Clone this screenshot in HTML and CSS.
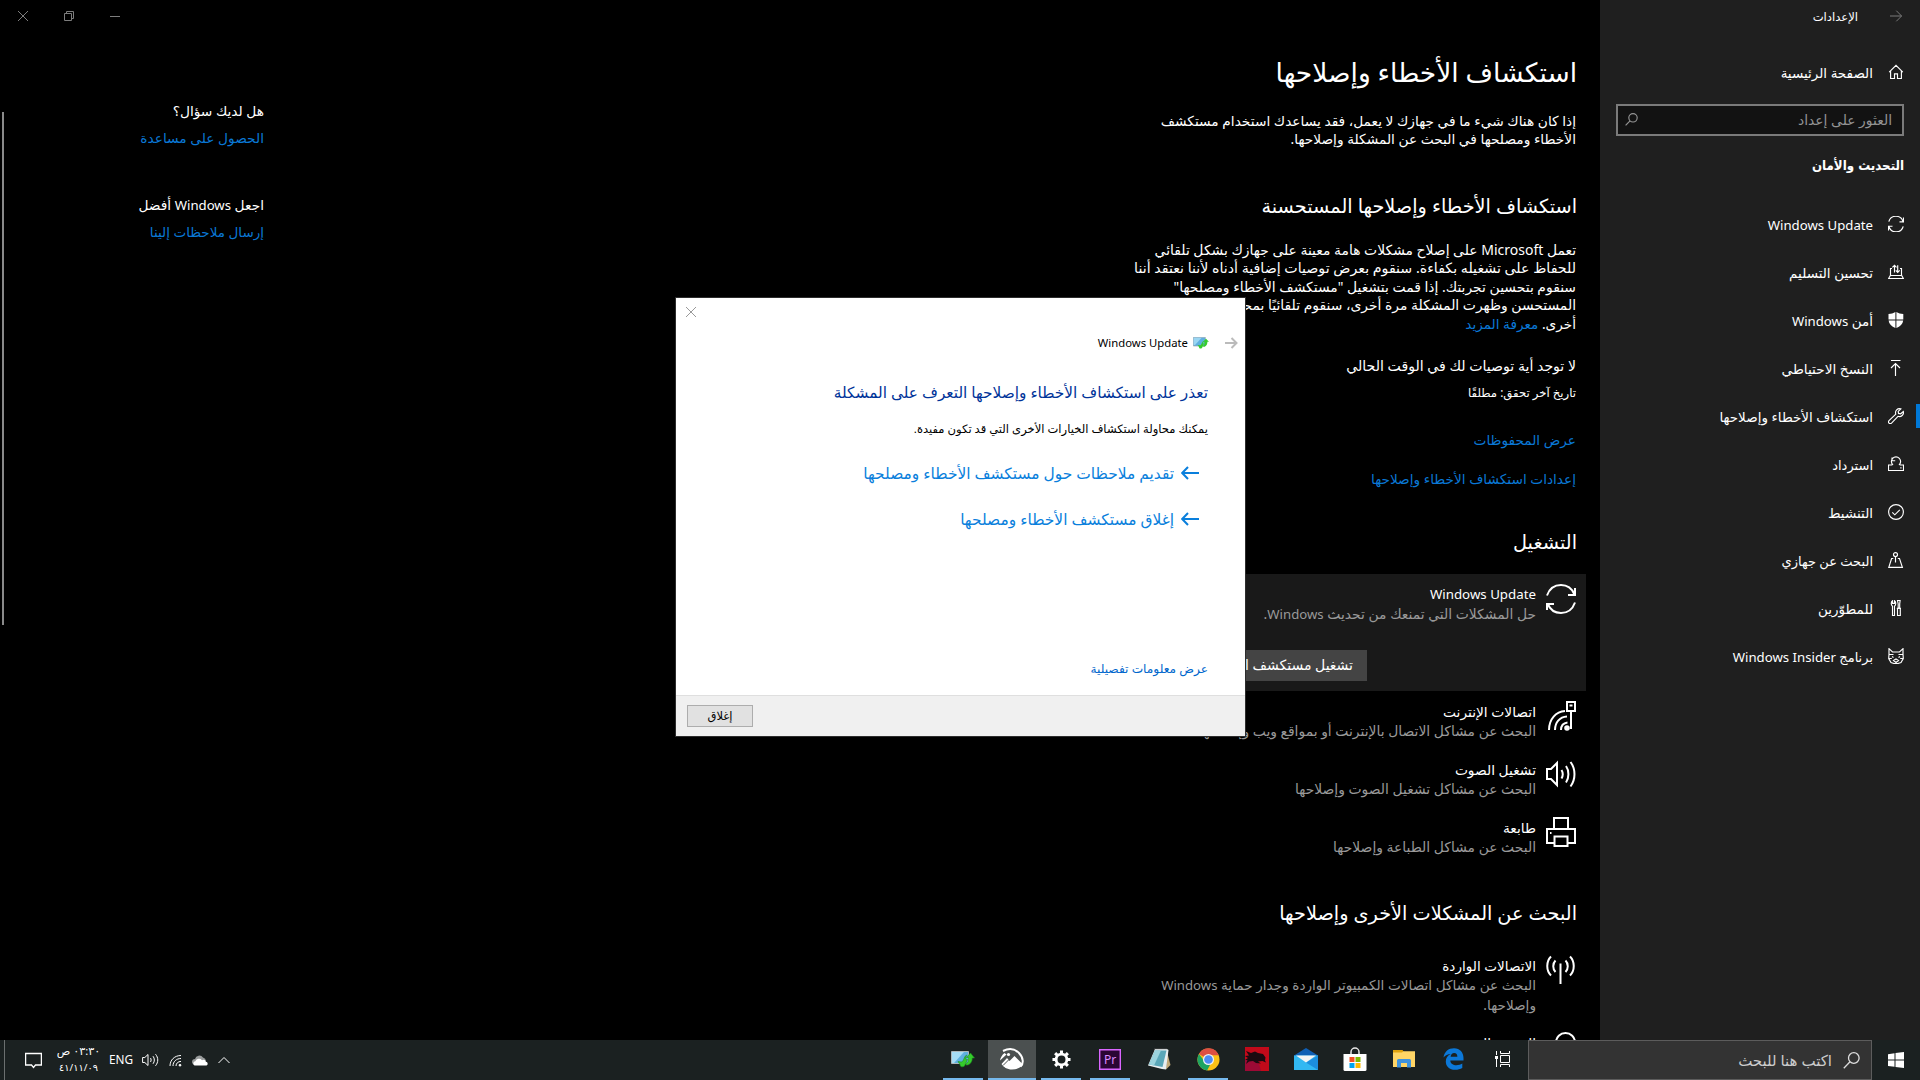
FILE: index.html
```
<!DOCTYPE html>
<html lang="ar" dir="rtl">
<head>
  <meta charset="UTF-8">
  <meta name="viewport" content="width=device-width, initial-scale=1.0">
  <title>الإعدادات</title>
  <link rel="stylesheet" href="styles.css">
</head>
<body>
  <div class="app">
    <aside class="sidebar">
      <div class="titlebar">
        <svg class="back" width="12" height="12" viewBox="0 0 12 12"><path d="M0 6h11.5M6.3.7 11.6 6l-5.3 5.3"/></svg>
        <span>الإعدادات</span>
      </div>
      <a class="nav-item home">
        <svg class="ico" width="16" height="16" viewBox="0 0 16 16"><path d="M1.2 8.2 8 1.4l6.8 6.8M2.6 7v7.5h3.9V9.8h3v4.7h3.9V7"/></svg>
        <span>الصفحة الرئيسية</span>
      </a>
      <div class="search">
        <span>العثور على إعداد</span>
        <svg class="ico" width="13" height="13" viewBox="0 0 13 13"><circle cx="8" cy="4.8" r="4.2"/><path d="M5 7.8.6 12.4"/></svg>
      </div>
      <h3 class="section">التحديث والأمان</h3>
      <nav class="nav">
        <a class="nav-item">
          <svg class="ico" width="16" height="16" viewBox="0 0 16 16"><path d="M.8 5.6a7.4 7.4 0 0 1 14.2 0M15.2 10.4a7.4 7.4 0 0 1-14.3 0M15.5 1.6v4.2h-4M.5 14.4v-4.2h4"/></svg>
          <span class="latin">Windows Update</span>
        </a>
        <a class="nav-item">
          <svg class="ico" width="16" height="16" viewBox="0 0 16 16"><path d="M4 4.500H2.500v7h11v-7H12M2.300 11.500.6 14.500h14.800l-1.700-3M6.500 8.500v-7M4.400 3.400l2.100-2 2 2M9.700 1.200v7M7.800 6.400l1.900 2 2-2"/></svg>
          <span>تحسين التسليم</span>
        </a>
        <a class="nav-item">
          <svg width="16" height="16" viewBox="0 0 16 16" fill="#fff"><path d="M7.4 0C5.500 1.300 3 2 .5 2v5.500h6.900zM8.400 0c1.900 1.300 4.400 2 6.900 2v5.500H8.400zM.6 8.500h6.800v7.500C3.700 14.500 1 12 .6 8.500zM8.400 8.500h6.800c-.4 3.500-3.100 6-6.800 7.500z"/></svg>
          <span>أمن <span class="latin">Windows</span></span>
        </a>
        <a class="nav-item">
          <svg class="ico" width="16" height="16" viewBox="0 0 16 16"><path d="M3 .5h9.500M7.500 16V3.500M3 8l4.500-4.500L12 8"/></svg>
          <span class="s136">النسخ الاحتياطي</span>
        </a>
        <a class="nav-item active">
          <svg class="ico" width="16" height="16" viewBox="0 0 16 16"><path d="M12.800.9a4 4 0 0 0-5 5.200L1 12.600a1.700 1.700 0 0 0 2.500 2.500L10 8.300a4 4 0 0 0 5.300-4.800l-2.600 2.300-2.200-.4-.3-2z"/></svg>
          <span>استكشاف الأخطاء وإصلاحها</span>
        </a>
        <a class="nav-item">
          <svg class="ico" width="16" height="16" viewBox="0 0 16 16"><path d="M4 9H.5v5.500h15V9H12M12.300 11.800h1.200M5 9a4.600 4.600 0 1 1 6 0M4 1.500v3.200h3.200"/></svg>
          <span class="s130">استرداد</span>
        </a>
        <a class="nav-item">
          <svg class="ico" width="16" height="16" viewBox="0 0 16 16"><circle cx="8" cy="8" r="7.400"/><path d="m4.300 8.300 2.500 2.500 5-5"/></svg>
          <span>التنشيط</span>
        </a>
        <a class="nav-item">
          <svg class="ico" width="16" height="16" viewBox="0 0 16 16"><circle cx="7.500" cy="2.600" r="2"/><path d="M7.500 4.600v6M5.300 6.500H3.600L.8 15.400h13.600l-2.900-8.900H9.800"/></svg>
          <span class="s130">البحث عن جهازي</span>
        </a>
        <a class="nav-item">
          <svg class="ico" width="16" height="16" viewBox="0 0 16 16"><path d="M4.500 15.500V6.300C2.700 5 2.900 1.800 4.500.7v2.600h2V.7c1.600 1.100 1.800 4.300 0 5.600v9.200zM9.500.5h2.600l-.4 3.500v4h-1.500V4zM8.800 8.300h4.200M9.500 8.300v7.200h2.800V8.300"/></svg>
          <span>للمطوّرين</span>
        </a>
        <a class="nav-item">
          <svg class="ico" width="16" height="16" viewBox="0 0 16 16"><path d="M1 .7v5.600L.7 10.500 3 14.500l3 1h4l3-1 2.300-4L15 6.300V.7L11.500 4h-7zM1 6.500h4.500M10.500 6.500H15M4 8.500l1.500 1M12 8.500l-1.500 1M5.500 12.500 8 11l2.500 1.500L8 14.500zM.8 10.500h3M12.200 10.500h3"/></svg>
          <span class="s130">برنامج <span class="latin">Windows Insider</span></span>
        </a>
      </nav>
    </aside>

    <main class="content">
      <h1>استكشاف الأخطاء وإصلاحها</h1>
      <p class="intro">إذا كان هناك شيء ما في جهازك لا يعمل، فقد يساعدك استخدام مستكشف<br>الأخطاء ومصلحها في البحث عن المشكلة وإصلاحها.</p>

      <h2>استكشاف الأخطاء وإصلاحها المستحسنة</h2>
      <p class="about">تعمل <span class="latin">Microsoft</span> على إصلاح مشكلات هامة معينة على جهازك بشكل تلقائي<br><span class="wide">للحفاظ على تشغيله بكفاءة. سنقوم بعرض توصيات إضافية أدناه لأننا نعتقد أننا</span><br>سنقوم بتحسين تجربتك. إذا قمت بتشغيل "مستكشف الأخطاء ومصلحها"<br>المستحسن وظهرت المشكلة مرة أخرى، سنقوم تلقائيًا بمحاولة إصلاحها مرة<br><span class="narrow">أخرى. <a class="link">معرفة المزيد</a></span></p>
      <p class="status">لا توجد أية توصيات لك في الوقت الحالي</p>
      <p class="checked">تاريخ آخر تحقق: مطلقًا</p>
      <a class="link row-link">عرض المحفوظات</a>
      <a class="link row-link">إعدادات استكشاف الأخطاء وإصلاحها</a>

      <h2 class="run">التشغيل</h2>
      <div class="card">
        <div class="tool">
          <svg class="big" width="30" height="30" viewBox="0 0 30 30"><path d="M1 11.500C3.500 4.500 9 1 15 1c6 0 11 3.500 13.500 9.500M29 18.500C26.500 25.500 21 29 15 29S4 25.500 1.500 19.500M29 4v7h-7M1 26v-6h7"/></svg>
          <div>
            <div class="name latin">Windows Update</div>
            <div class="desc">حل المشكلات التي تمنعك من تحديث <span class="latin">Windows</span>.</div>
          </div>
        </div>
        <button class="run-btn">تشغيل مستكشف الأخطاء ومصلحها</button>
      </div>
      <div class="tool">
        <svg class="big" width="30" height="30" viewBox="0 0 30 30"><path d="M21 1h8v9h-8zM23.500 4.500h3M25 10v18M3 29C3 18 10 10.500 19 10M9 29c0-7.500 4.500-13 12-13.500M15 29c0-4 2.500-7 6.500-7.500"/><circle cx="21" cy="27" r="1.800" fill="#fff"/></svg>
        <div>
          <div class="name">اتصالات الإنترنت</div>
          <div class="desc">البحث عن مشاكل الاتصال بالإنترنت أو بمواقع ويب وإصلاحها</div>
        </div>
      </div>
      <div class="tool">
        <svg class="big" width="30" height="30" viewBox="0 0 30 30"><path d="M1 10h4l6-6v22l-6-6H1zM15.500 11c1.500 2.500 1.500 6 0 8.500M20 7c3.200 4.500 3.200 12 0 16.500M24.500 3c5.300 7 5.300 17.500 0 24.500"/></svg>
        <div>
          <div class="name">تشغيل الصوت</div>
          <div class="desc">البحث عن مشاكل تشغيل الصوت وإصلاحها</div>
        </div>
      </div>
      <div class="tool">
        <svg class="big" width="30" height="30" viewBox="0 0 30 30"><path d="M8 12V1h14v11M8 26H1V12h28v14h-7M8.500 19.500h13V29h-13z"/><path d="M4 16h1.500"/></svg>
        <div>
          <div class="name">طابعة</div>
          <div class="desc">البحث عن مشاكل الطباعة وإصلاحها</div>
        </div>
      </div>

      <h2 class="other">البحث عن المشكلات الأخرى وإصلاحها</h2>
      <div class="tool tall">
        <svg class="big" width="30" height="30" viewBox="0 0 30 30"><path d="M14.500 8.500V29M5 1.500c-5 5-5 14 0 19M24 1.500c5 5 5 14 0 19M9.500 5.500c-3 3-3 8.500 0 11.500M19.500 5.500c3 3 3 8.500 0 11.500"/></svg>
        <div>
          <div class="name s136">الاتصالات الواردة</div>
          <div class="desc narrow">البحث عن مشاكل اتصالات الكمبيوتر الواردة وجدار حماية <span class="latin">Windows</span><br>وإصلاحها.</div>
        </div>
      </div>
      <div class="tool">
        <svg class="big" width="30" height="30" viewBox="0 0 30 30"><circle cx="19.500" cy="10.500" r="9.500"/><path d="M12.500 17.500 1 29"/></svg>
        <div>
          <div class="name">البحث والفهرسة</div>
        </div>
      </div>
    </main>

    <aside class="help">
      <div class="caption">
        <span class="cap-btn"><svg width="12" height="12" viewBox="0 0 12 12"><path d="m1 1 10 10M11 1 1 11"/></svg></span>
        <span class="cap-btn"><svg width="12" height="12" viewBox="0 0 12 12"><path d="M1.500 3.500h7v7h-7zM3.500 3.500v-2h7v7h-2"/></svg></span>
        <span class="cap-btn"><svg width="12" height="12" viewBox="0 0 12 12"><path d="M1 6.500h10"/></svg></span>
      </div>
      <div class="help-block">
        <p>هل لديك سؤال؟</p>
        <a class="link">الحصول على مساعدة</a>
      </div>
      <div class="help-block">
        <p>اجعل <span class="latin">Windows</span> أفضل</p>
        <a class="link s135">إرسال ملاحظات إلينا</a>
      </div>
    </aside>
    <div class="scrollbar"></div>
  </div>

  <div class="dialog">
    <div class="dialog-top">
      <svg class="close" width="12" height="12" viewBox="0 0 12 12"><path d="m1 1 10 10M11 1 1 11"/></svg>
    </div>
    <div class="dialog-head">
      <svg class="dlg-back" width="13" height="12" viewBox="0 0 13 12"><path d="M0 6h11M6.500 1l5 5-5 5"/></svg>
      <svg width="16" height="12" viewBox="0 0 24 18"><path fill="#5fb0e0" stroke="#9aa6ad" d="M.5.5h18v13H.5z"/><path fill="#9ad6f3" d="M1 1h12L3 12H1z"/><path fill="#35cc2c" d="m7 12 3 .5c3 0 3-5 6-7l-1 4 1.500.5-3 6.500c-2 1.500-4.500 1-4.500-1.500zM15 13c3-1 2-5 2-6h-2l4.500-4.500L24 7h-2.500c.5 4-2.500 8-6 7.500z"/></svg>
      <span>Windows Update</span>
    </div>
    <div class="dialog-body">
      <h4>تعذر على استكشاف الأخطاء وإصلاحها التعرف على المشكلة</h4>
      <p>يمكنك محاولة استكشاف الخيارات الأخرى التي قد تكون مفيدة.</p>
      <a class="command"><svg width="18" height="14" viewBox="0 0 18 14"><path d="M18 7H1.500M7 1 1.200 7 7 13"/></svg>تقديم ملاحظات حول مستكشف الأخطاء ومصلحها</a>
      <a class="command"><svg width="18" height="14" viewBox="0 0 18 14"><path d="M18 7H1.500M7 1 1.200 7 7 13"/></svg>إغلاق مستكشف الأخطاء ومصلحها</a>
      <a class="details">عرض معلومات تفصيلية</a>
    </div>
    <div class="dialog-foot">
      <button class="close-btn">إغلاق</button>
    </div>
  </div>

  <footer class="taskbar">
    <div class="start">
      <svg width="16" height="16" viewBox="0 0 16 16" fill="#fff"><path d="M0 2.200 6.500 1.200v6.300H0zM7.500 1.100 16 0v7.500H7.500zM0 8.500h6.500v6.300L0 13.900zM7.500 8.500H16V16l-8.500-1.100z"/></svg>
    </div>
    <div class="task-search">
      <svg width="17" height="17" viewBox="0 0 17 17"><circle cx="10.800" cy="6" r="5.300"/><path d="M7 9.800.8 16.200"/></svg>
      <span>اكتب هنا للبحث</span>
    </div>
    <div class="tasks">
      <div class="task view">
        <svg width="18" height="16" viewBox="0 0 18 16" fill="none" stroke="#fff"><path d="M5.500 4.500h9v7h-9zM5.500 0v2.500h9V0M5.500 16v-2.500h9V16M1.500 0v4M1.500 8v8"/><path d="M0 6.500h3" stroke-width="3"/></svg>
      </div>
      <div class="task">
        <svg width="21" height="22" viewBox="0 0 21 22"><path fill="#0c78d8" d="M.5 9.500C1.500 3.500 5.500.3 11 .3c6 0 9.500 4.300 9.500 9.700v2.500H7.300c.2 3.300 2.900 4.700 6 4.700 2.400 0 4.300-.6 6-1.600v4.400c-2 1.200-4.400 1.800-7.200 1.800C6.500 21.800 2.800 18.600 2.800 13.500c0-3.200 1.800-6 4.900-7.400C5 6.300 2.300 7.300.5 9.500zM7.600 8.700h6.800c0-2.200-1.100-3.700-3.200-3.700-2 0-3.300 1.600-3.600 3.700z"/></svg>
      </div>
      <div class="task">
        <svg width="22" height="20" viewBox="0 0 22 20"><path fill="#e0a20e" d="M0 1h9.500l1.500 2H22v3H0z"/><path fill="#ffd566" d="M0 3.500h9l1.500-1.300H22V18H0z"/><path fill="#3f92dd" d="M4 11.500a1.500 1.500 0 0 1 1.500-1.500h11a1.500 1.500 0 0 1 1.500 1.500V18.500h-4V14H8v4.500H4z"/></svg>
      </div>
      <div class="task">
        <svg width="24" height="24" viewBox="0 0 24 24"><path fill="none" stroke="#e6e6e6" stroke-width="1.500" d="M8 8V5a4 4 0 0 1 8 0v3"/><path fill="#fff" d="M.5 7h23v15.500a1.500 1.500 0 0 1-1.500 1.500H2a1.500 1.500 0 0 1-1.500-1.500z"/><path fill="#f25022" d="M6.500 10h5v5h-5z"/><path fill="#7fba00" d="M12.500 10h5v5h-5z"/><path fill="#00a4ef" d="M6.500 16h5v5h-5z"/><path fill="#ffb900" d="M12.500 16h5v5h-5z"/></svg>
      </div>
      <div class="task">
        <svg width="24" height="22" viewBox="0 0 24 22"><path fill="#0f5fb4" d="M0 7.500 12 0l12 7.500V12H0z"/><path fill="#32b8f2" d="M0 7.500h24V22H0z"/><path fill="#1c8ede" d="M24 22 12 14.500 24 7.500z"/><path fill="#f3f3f3" d="M2 7.500h20L12 14.500z"/></svg>
      </div>
      <div class="task">
        <svg width="24" height="24" viewBox="0 0 24 24"><path fill="#c20a1a" d="M0 0h24v24H0z"/><path fill="#9c0a35" d="M0 13h8l6 4 2 7H0z"/><path fill="#1b0a10" d="m1 4 5 2 4-1.500L13 6l5 1 2.500 3.500-.5 3 1 2-3.500-1.500-4.500.5 3 2-5-.5-3-2-4 .5-3 2.500 1.500-4L0 13l3-2-3-2 4-.5z"/></svg>
      </div>
      <div class="task open">
        <svg width="23" height="23" viewBox="0 0 24 24"><circle cx="12" cy="12" r="11.500" fill="#fbc116"/><path fill="#dd4f43" d="M12 12 2 6.200a11.500 11.500 0 0 1 20.700 1.300H12z"/><path fill="#1da462" d="M2 6.200A11.500 11.500 0 0 0 10.500 23.400L15.500 14 12 12l-4 2z"/><circle cx="12" cy="12" r="5.800" fill="#f1f1f1"/><circle cx="12" cy="12" r="4.500" fill="#4c8bf5"/></svg>
      </div>
      <div class="task">
        <svg width="23" height="22" viewBox="0 0 23 22"><path fill="#c2a878" d="M18.500 2 22.500 17 18 21.500z"/><path fill="#e9eef0" d="M7 1h12l1.500 1L18 21.500l-4-.5L0 17.500z"/><path fill="#5aa7b8" d="M7 2.500h11.500L14.500 19 1 16.500z"/><path fill="#9bd3dd" d="M7 2.500h6L6 17.500l-5-1z"/><path stroke="#777" stroke-dasharray="1 1" d="M6.500 1h12.500"/></svg>
      </div>
      <div class="task open">
        <svg width="22" height="21" viewBox="0 0 22 21"><path fill="#2a0634" stroke="#d966ff" stroke-width="1.400" d="M.7.7h20.600v19.600H.7z"/><text class="pr" x="11" y="14.500">Pr</text></svg>
      </div>
      <div class="task open">
        <svg width="19" height="19" viewBox="0 0 20 20"><circle cx="10" cy="10" r="5.700" fill="none" stroke="#fff" stroke-width="3"/><path stroke="#fff" stroke-width="3.200" d="M10 .5v3.500M10 16v3.500M.5 10H4M16 10h3.500M3.300 3.300l2.400 2.400M14.300 14.300l2.400 2.400M16.700 3.300l-2.400 2.400M5.700 14.300l-2.400 2.400"/></svg>
      </div>
      <div class="task current">
        <svg width="24" height="22" viewBox="0 0 24 22"><path fill="none" stroke="#fff" stroke-width="2" d="M3 3C9 0 15 1 19 5c5 5 4.500 11 1.500 13.500"/><path fill="#fff" d="M1.500 16 7 10l2.500 3 5-5L23 16.500c-2 3-6 5-11 5S3.500 19 1.500 16zM0 12.500c.5-3 2-5.500 4.500-7.500l2 1.500z"/><circle cx="8.500" cy="6.500" r="1.600" fill="#fff"/><path stroke="#4b5050" d="m3 17.500 6-6"/></svg>
      </div>
      <div class="task open">
        <svg width="24" height="18" viewBox="0 0 24 18"><path fill="#5fb0e0" stroke="#aeb6ba" d="M.5 1.500h17v12H.5z"/><path fill="#a5dcf5" d="M1 2h12L3 13H1z"/><path fill="#35cc2c" stroke="#1f8f20" stroke-width=".6" d="m7 11.500 3 .5c3 0 2.500-5 5.500-7l-1 4 2 .5-3 6.500c-2 1.500-4.500 1-4.500-1.500zM15 13.500c3-1 2.500-5 2.500-6h-2l4-4.500 4 5h-2.300c.3 4-2.700 7.500-6.200 7z"/></svg>
      </div>
    </div>
    <div class="tray">
      <svg width="12" height="8" viewBox="0 0 12 8"><path d="M.5 7 6 1.500 11.500 7"/></svg>
      <svg class="cloud" width="16" height="11" viewBox="0 0 16 11"><path class="back-cloud" d="M0 7a3 3 0 0 1 3-3A4.500 4.500 0 0 1 11 2.500 4 4 0 0 1 14 6L3 9.500A2.500 2.500 0 0 1 0 7z"/><path class="front-cloud" d="M2.500 10.500a2.300 2.300 0 0 1 .8-4.300 4 4 0 0 1 6.700-1 3 3 0 0 1 4 1.500 2 2 0 0 1 .5 3.800z"/></svg>
      <svg width="13" height="13" viewBox="0 0 13 13"><path d="M1 12C1 6 5.500 1.500 12 1.500M4 12c0-4.300 3.300-7.500 8-7.500M7 12c0-2.600 2-4.600 5-4.600"/><circle cx="11" cy="11.200" r=".9" fill="#fff"/></svg>
      <svg width="17" height="14" viewBox="0 0 17 14"><path d="M.6 4.500h2.200L6 1.500v11L2.800 9.500H.6zM8.500 5c.8 1.200.8 2.800 0 4M11 3.200c1.800 2.300 1.800 5.300 0 7.600M13.500 1.200c3 3.500 3 8 0 11.600"/></svg>
      <span class="lang">ENG</span>
      <div class="clock"><span>٠٣:٣٠ ص</span><span class="date">٤١/١١/٠٩</span></div>
      <svg class="notify" width="17" height="17" viewBox="0 0 17 17"><path d="M.6 1.500h15.800v11.500h-5.900l-2 2.500-2-2.500H.6z"/></svg>
      <div class="show-desktop"></div>
    </div>
  </footer>
</body>
</html>
```
FILE: styles.css
```
* {
  box-sizing: border-box;
}

body {
  margin: 0;
  width: 1920px;
  height: 1080px;
  display: flex;
  flex-direction: column;
  overflow: hidden;
  background: #000;
  color: #fff;
  font-family: "Noto Sans", "DejaVu Sans", sans-serif;
  font-size: 13.5px;
  white-space: nowrap;
}

h1, h2, h3, h4, p {
  margin: 0;
  font-weight: normal;
}

svg {
  display: block;
  flex: none;
}

.ico, .big {
  fill: none;
  stroke: #fff;
}

.ico {
  stroke-width: 1.15;
}

.big {
  stroke-width: 2;
}

.latin {
  font-size: 13.2px;
}

.link {
  color: #0a78d6;
}

.app {
  height: 1040px;
  display: flex;
  overflow: hidden;
  position: relative;
}

/* sidebar */
.sidebar {
  width: 320px;
  flex: none;
  background: #1f1f1f;
}

.titlebar {
  height: 32px;
  padding-right: 18px;
  display: flex;
  align-items: center;
  gap: 32px;
  font-size: 11.6px;
}

.back {
  fill: none;
  stroke: #7a7a7a;
}

.nav-item {
  position: relative;
  height: 48px;
  padding-right: 16px;
  display: flex;
  align-items: center;
  gap: 15px;
}

.nav-item > span {
  padding-top: 1px;
}

.home {
  margin-top: 16px;
}

.s136 { font-size: 13.7px; }
.s135 { font-size: 13.5px; }
.s130 { font-size: 13px; }

.active::before {
  content: "";
  position: absolute;
  right: 0;
  top: 12px;
  width: 4px;
  height: 24px;
  background: #0078d7;
}

.search {
  height: 32px;
  margin: 8px 16px 0;
  padding: 0 10px 2px 7px;
  border: 2px solid #7a7a7a;
  background: #121212;
  color: #949494;
  display: flex;
  align-items: center;
  justify-content: space-between;
  font-size: 13.9px;
}

.search .ico {
  stroke: #949494;
}

.section {
  margin: 20px 16px 24px;
  line-height: 20px;
  font-family: "DejaVu Sans Condensed", "DejaVu Sans", sans-serif;
  font-size: 13.2px;
  font-weight: bold;
}

/* main column */
.content {
  flex: 1;
  padding: 54px 24px 0 0;
  line-height: 18.5px;
}

h1 {
  font-size: 26.5px;
  line-height: 36px;
  margin-right: -1px;
}

h2 {
  font-size: 19.3px;
  line-height: 26px;
  margin-top: 44px;
  margin-right: -1px;
}

.intro {
  font-size: 13.75px;
  margin-top: 21.5px;
}

.about {
  margin-top: 22.5px;
  font-size: 13.9px;
  line-height: 18.4px;
}

.about .latin {
  font-size: 14px;
}

.wide {
  font-size: 14.2px;
}

.narrow {
  font-size: 13.65px;
}

.status {
  margin-top: 24px;
  font-size: 14.1px;
}

.checked {
  margin: 8.5px 0 31px;
  font-size: 11.7px;
  line-height: 16px;
}

.row-link {
  display: block;
  margin-bottom: 20.5px;
  font-size: 13.7px;
}

.run {
  margin: 40px -1px 19px 0;
}

.card {
  width: 450px;
  height: 117px;
  margin-right: -10px;
  padding-right: 10px;
  background: #191919;
}

.tool {
  height: 58px;
  padding-top: 10px;
  display: flex;
  gap: 10px;
  line-height: 19px;
}

.tool > div {
  padding-top: 1px;
}

.name {
  font-size: 13.8px;
}

.name.latin {
  font-size: 13.3px;
}

.name.s136 {
  font-size: 13.6px;
}

.desc {
  color: #999;
  font-size: 13.9px;
}

.desc.narrow {
  font-size: 13.65px;
}

.tall {
  height: 77px;
}

.other {
  margin: 35.5px -1px 19px 0;
}

.run-btn {
  display: block;
  width: 223px;
  height: 31px;
  margin: 18px 209px 0 0;
  padding: 0 14px 0 0;
  border: 0;
  background: #444;
  color: #fff;
  font: inherit;
  font-size: 14px;
  text-align: right;
}

/* help column */
.help {
  width: 264px;
  flex: none;
}

.caption {
  height: 32px;
  display: flex;
  direction: ltr;
  margin-bottom: 69px;
}

.cap-btn {
  width: 46px;
  display: flex;
  align-items: center;
  justify-content: center;
}

.caption svg {
  fill: none;
  stroke: #7d7d7d;
}

.help-block {
  margin-bottom: 47px;
  line-height: 20px;
  font-size: 13.75px;
}

.help-block p {
  margin-bottom: 7px;
}

.scrollbar {
  position: absolute;
  left: 2px;
  top: 112px;
  width: 2px;
  height: 513px;
  background: #8a8a8a;
}

/* troubleshooter window */
.dialog {
  position: absolute;
  left: 675px;
  top: 297px;
  width: 571px;
  height: 440px;
  border: 1px solid #2d2d2d;
  background: #fff;
  color: #000;
  display: flex;
  flex-direction: column;
}

.dialog svg {
  fill: none;
}

.dialog-top {
  height: 37px;
  padding: 8px 0 0 9px;
  display: flex;
  justify-content: flex-end;
}

.close {
  stroke: #999;
}

.dialog-head {
  height: 16px;
  padding-right: 7px;
  display: flex;
  align-items: center;
  font-size: 11.3px;
  line-height: 18px;
}

.dlg-back {
  stroke: #bbb;
  stroke-width: 2;
  margin-left: 16px;
}

.dialog-head span {
  margin-right: 5px;
}

.dialog-body {
  flex: 1;
  padding: 30px 37px 0 0;
}

.dialog-body h4 {
  color: #003399;
  font-size: 15.35px;
  line-height: 22px;
}

.dialog-body p {
  margin: 18px 0 25px;
  font-size: 11.57px;
  line-height: 16px;
}

.command {
  display: flex;
  align-items: center;
  gap: 7px;
  margin: 0 9px 24px 0;
  color: #0a7fdc;
  font-size: 15.45px;
  line-height: 22px;
}

.command svg {
  stroke: #0a7fdc;
  stroke-width: 2;
}

.details {
  display: block;
  margin-top: 131px;
  color: #0066cc;
  font-size: 12.2px;
  line-height: 16px;
}

.dialog-foot {
  height: 41px;
  padding: 9px 0 0 11px;
  border-top: 1px solid #dfdfdf;
  background: #f0f0f0;
  display: flex;
  justify-content: flex-end;
}

.close-btn {
  width: 66px;
  height: 22px;
  padding: 0 0 2px;
  border: 1px solid #adadad;
  background: #e1e1e1;
  color: #000;
  font: 11.5px "Noto Sans", "DejaVu Sans", sans-serif;
}

/* taskbar */
.taskbar {
  position: relative;
  height: 40px;
  display: flex;
  background: #1b2121;
}

.start {
  width: 48px;
  display: flex;
  align-items: center;
  justify-content: center;
}

.task-search {
  width: 344px;
  padding-right: 11px;
  border: 1px solid #5c5c5c;
  background: #333;
  color: #ccc;
  display: flex;
  align-items: center;
  gap: 11px;
  font-size: 15px;
}

.task-search svg {
  fill: none;
  stroke: #ddd;
  stroke-width: 1.3;
}

.tasks {
  display: flex;
  gap: 1px;
}

.task {
  width: 48px;
  height: 40px;
  display: flex;
  align-items: center;
  justify-content: center;
  border-bottom: 2px solid transparent;
  background-clip: padding-box;
}

.view {
  margin-left: 2px;
}

.open {
  width: 40px;
  margin: 0 4px;
  border-color: #76b9ed;
}

.current {
  background: #4b5050;
  border-color: #76b9ed;
}

.pr {
  fill: #d98cff;
  font: 12px "Noto Sans", sans-serif;
  text-anchor: middle;
  direction: ltr;
}

.tray {
  margin-right: auto;
  display: flex;
  align-items: center;
}

.tray svg {
  fill: none;
  stroke: #fff;
  margin-left: 10px;
}

.cloud path {
  stroke: none;
}

.back-cloud { fill: #9a9d9d; }
.front-cloud { fill: #fff; }

.lang {
  width: 24px;
  margin-left: 9px;
  padding-bottom: 2px;
  font-size: 11.8px;
}

.tray svg:nth-child(4) {
  margin-left: 9px;
}

.clock {
  width: 43px;
  display: flex;
  flex-direction: column;
  align-items: center;
  font-size: 11.2px;
  line-height: 17px;
  padding-bottom: 2px;
}

.date {
  font-size: 9.8px;
}

.tray .notify {
  margin: 0 15px 0 20px;
  stroke-width: 1.3;
}

.show-desktop {
  width: 5px;
  height: 40px;
  border-right: 1px solid #6b6f6f;
}
```
